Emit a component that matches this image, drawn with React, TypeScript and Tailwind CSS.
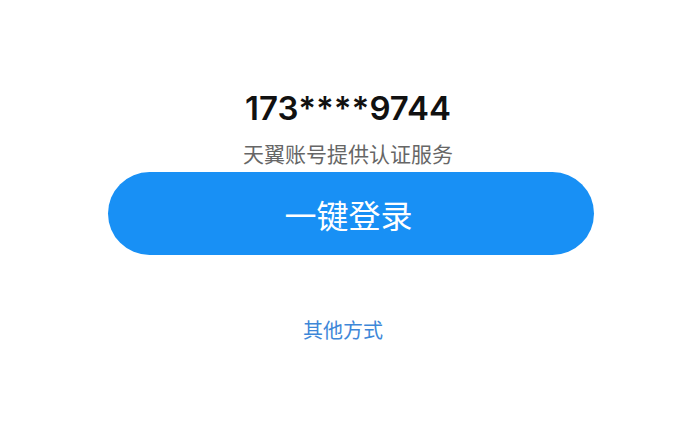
export default function App() {
  return (
    <div className="h-[424px] w-[690px] overflow-hidden bg-white">
      <div className="flex flex-col items-center pl-[6px] pt-[90px]">
        <div className="font-['Inter',sans-serif] text-[33px] font-semibold leading-[36px] text-[#111]">
          173****9744
        </div>
        <div className="mt-[17px] font-['Noto_Sans_CJK_SC',sans-serif] text-[21px] leading-[21px] text-[#666]">
          天翼账号提供认证服务
        </div>
        <button
          type="button"
          className="ml-[5px] mt-[8px] flex h-[83px] w-[486px] items-center justify-center rounded-full bg-[#1890f5] pr-[4px] font-['Noto_Sans_CJK_SC',sans-serif] text-[32px] leading-[32px] text-white"
        >
          一键登录
        </button>
        <div className="mt-[65px] pr-[10px] font-['Noto_Sans_CJK_SC',sans-serif] text-[20px] leading-[20px] text-[#3e87d8]">
          其他方式
        </div>
      </div>
    </div>
  );
}
